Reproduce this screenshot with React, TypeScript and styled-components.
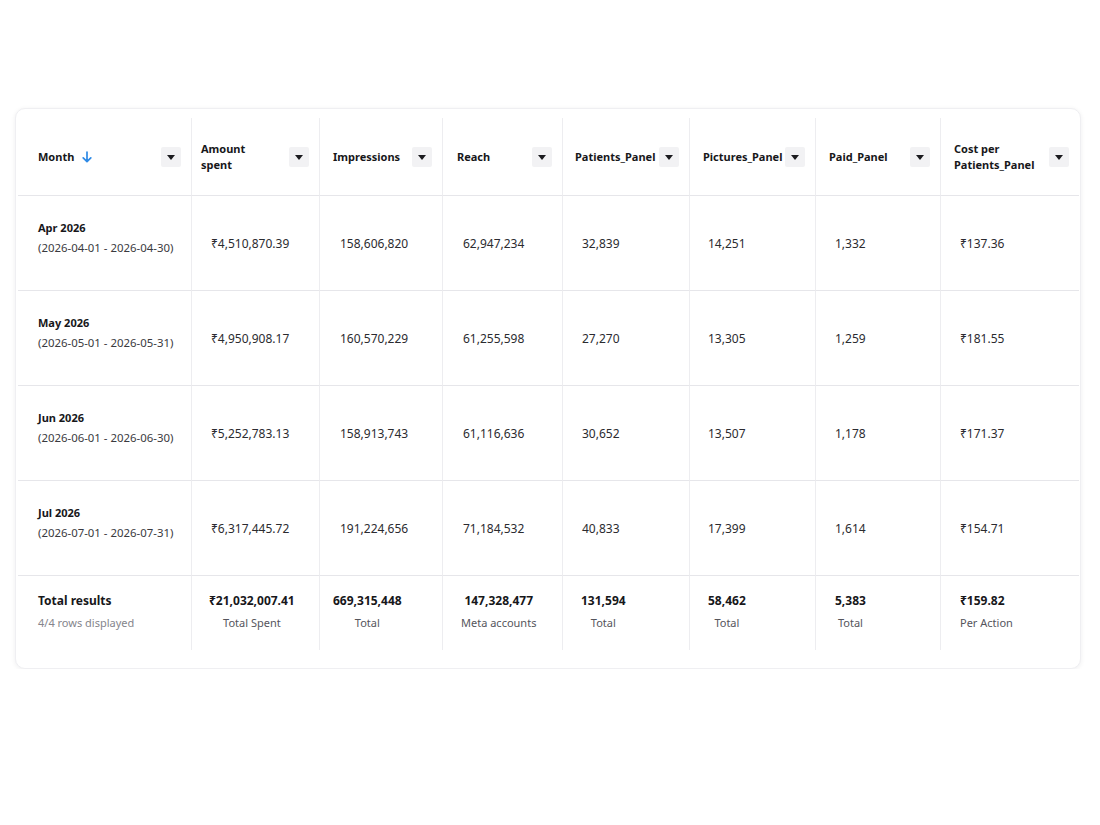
import React from "react";
import styled, { createGlobalStyle } from "styled-components";

const GlobalStyle = createGlobalStyle`
  html, body { margin: 0; padding: 0; background: #ffffff; }
  body { font-family: "Noto Sans", "Open Sans", Arial, sans-serif; color: #1b1b1f; }
`;

const COLS = [174, 128, 123, 120, 127, 126, 125, 138];

const Page = styled.div`
  padding: 108px 0 0 15px;
`;

const Card = styled.div`
  width: 1066px;
  box-sizing: border-box;
  background: #fff;
  border: 1px solid #efeff2;
  border-radius: 10px;
  box-shadow: 0 1px 5px rgba(20, 20, 40, 0.07);
  padding: 9px 1px 18px 2px;
`;

const Grid = styled.div`
  display: grid;
  grid-template-columns: ${COLS.map((c) => `${c}px`).join(" ")};
`;

const HeadCell = styled.div<{ $pad: number; $last?: boolean }>`
  height: 78px;
  box-sizing: border-box;
  display: flex;
  align-items: center;
  justify-content: space-between;
  padding: 0 10px 0 ${(p) => p.$pad}px;
  border-right: ${(p) => (p.$last ? "none" : "1px solid #ededf0")};
  border-bottom: 1px solid #e6e6ea;
`;

const HeadLabel = styled.div`
  font-size: 11px;
  font-weight: 700;
  line-height: 16px;
  color: #17171a;
  display: flex;
  align-items: center;
  gap: 8px;
`;

const MenuButton = styled.div`
  width: 20px;
  height: 20px;
  flex: none;
  border-radius: 2px;
  background: #f2f2f4;
  display: flex;
  align-items: center;
  justify-content: center;
`;

const Caret = styled.span`
  width: 0;
  height: 0;
  border-left: 4px solid transparent;
  border-right: 4px solid transparent;
  border-top: 5px solid #1b1b1f;
  margin-top: 1px;
`;

const BodyCell = styled.div<{ $pad: number; $last?: boolean }>`
  height: 95px;
  box-sizing: border-box;
  display: flex;
  align-items: center;
  padding: 0 8px 0 ${(p) => p.$pad}px;
  border-right: ${(p) => (p.$last ? "none" : "1px solid #ededf0")};
  border-bottom: 1px solid #e6e6ea;
  font-size: 12px;
  color: #2b2b30;
`;

const MonthBlock = styled.div`
  display: flex;
  flex-direction: column;
  gap: 4px;
  margin-bottom: 10px;
`;

const MonthTitle = styled.div`
  font-size: 11px;
  font-weight: 700;
  line-height: 16px;
  color: #17171a;
`;

const MonthRange = styled.div`
  font-size: 11.4px;
  line-height: 16px;
  color: #3a3a40;
`;

const FootCell = styled.div<{ $pad: number; $last?: boolean }>`
  height: 74px;
  box-sizing: border-box;
  display: flex;
  align-items: center;
  padding: 0 8px 2px ${(p) => p.$pad}px;
  border-right: ${(p) => (p.$last ? "none" : "1px solid #ededf0")};
`;

const FootBlock = styled.div<{ $left?: boolean }>`
  display: inline-flex;
  flex-direction: column;
  align-items: ${(p) => (p.$left ? "flex-start" : "center")};
  gap: 6px;
`;

const FootValue = styled.div`
  font-size: 12px;
  font-weight: 700;
  line-height: 16px;
  color: #17171a;
`;

const FootSub = styled.div<{ $muted?: boolean }>`
  font-size: 11px;
  line-height: 16px;
  color: ${(p) => (p.$muted ? "#85858c" : "#55555c")};
`;

const SortArrow = () => (
  <svg width="10" height="12" viewBox="0 0 10 12" fill="none">
    <path d="M5 1v9.5M1.2 6.8 5 10.6l3.8-3.8" stroke="#2e8ae6" strokeWidth="1.7" strokeLinecap="round" strokeLinejoin="round" />
  </svg>
);

const headers: { label: React.ReactNode; pad: number; sort?: boolean }[] = [
  { label: "Month", pad: 20, sort: true },
  { label: <>Amount<br />spent</>, pad: 9 },
  { label: "Impressions", pad: 13 },
  { label: "Reach", pad: 14 },
  { label: "Patients_Panel", pad: 12 },
  { label: "Pictures_Panel", pad: 13 },
  { label: "Paid_Panel", pad: 13 },
  { label: <>Cost per<br />Patients_Panel</>, pad: 13 },
];

const rows = [
  { m: "Apr 2026", r: "(2026-04-01 - 2026-04-30)", v: ["₹4,510,870.39", "158,606,820", "62,947,234", "32,839", "14,251", "1,332", "₹137.36"] },
  { m: "May 2026", r: "(2026-05-01 - 2026-05-31)", v: ["₹4,950,908.17", "160,570,229", "61,255,598", "27,270", "13,305", "1,259", "₹181.55"] },
  { m: "Jun 2026", r: "(2026-06-01 - 2026-06-30)", v: ["₹5,252,783.13", "158,913,743", "61,116,636", "30,652", "13,507", "1,178", "₹171.37"] },
  { m: "Jul 2026", r: "(2026-07-01 - 2026-07-31)", v: ["₹6,317,445.72", "191,224,656", "71,184,532", "40,833", "17,399", "1,614", "₹154.71"] },
];

const bodyPads = [19, 20, 20, 19, 18, 19, 19];

const totals: { v: string; s: string; pad: number; left?: boolean }[] = [
  { v: "₹21,032,007.41", s: "Total Spent", pad: 17 },
  { v: "669,315,448", s: "Total", pad: 13 },
  { v: "147,328,477", s: "Meta accounts", pad: 18 },
  { v: "131,594", s: "Total", pad: 18 },
  { v: "58,462", s: "Total", pad: 18 },
  { v: "5,383", s: "Total", pad: 19 },
  { v: "₹159.82", s: "Per Action", pad: 19, left: true },
];

export default function App() {
  return (
    <>
      <GlobalStyle />
      <Page>
        <Card>
          <Grid>
            {headers.map((h, i) => (
              <HeadCell key={i} $pad={h.pad} $last={i === headers.length - 1}>
                <HeadLabel>
                  <span>{h.label}</span>
                  {h.sort && <SortArrow />}
                </HeadLabel>
                <MenuButton>
                  <Caret />
                </MenuButton>
              </HeadCell>
            ))}
            {rows.map((row) => (
              <React.Fragment key={row.m}>
                <BodyCell $pad={20}>
                  <MonthBlock>
                    <MonthTitle>{row.m}</MonthTitle>
                    <MonthRange>{row.r}</MonthRange>
                  </MonthBlock>
                </BodyCell>
                {row.v.map((val, j) => (
                  <BodyCell key={j} $pad={bodyPads[j]} $last={j === row.v.length - 1}>
                    {val}
                  </BodyCell>
                ))}
              </React.Fragment>
            ))}
            <FootCell $pad={20}>
              <FootBlock $left>
                <FootValue>Total results</FootValue>
                <FootSub $muted>4/4 rows displayed</FootSub>
              </FootBlock>
            </FootCell>
            {totals.map((t, j) => (
              <FootCell key={j} $pad={t.pad} $last={j === totals.length - 1}>
                <FootBlock $left={t.left}>
                  <FootValue>{t.v}</FootValue>
                  <FootSub>{t.s}</FootSub>
                </FootBlock>
              </FootCell>
            ))}
          </Grid>
        </Card>
      </Page>
    </>
  );
}
